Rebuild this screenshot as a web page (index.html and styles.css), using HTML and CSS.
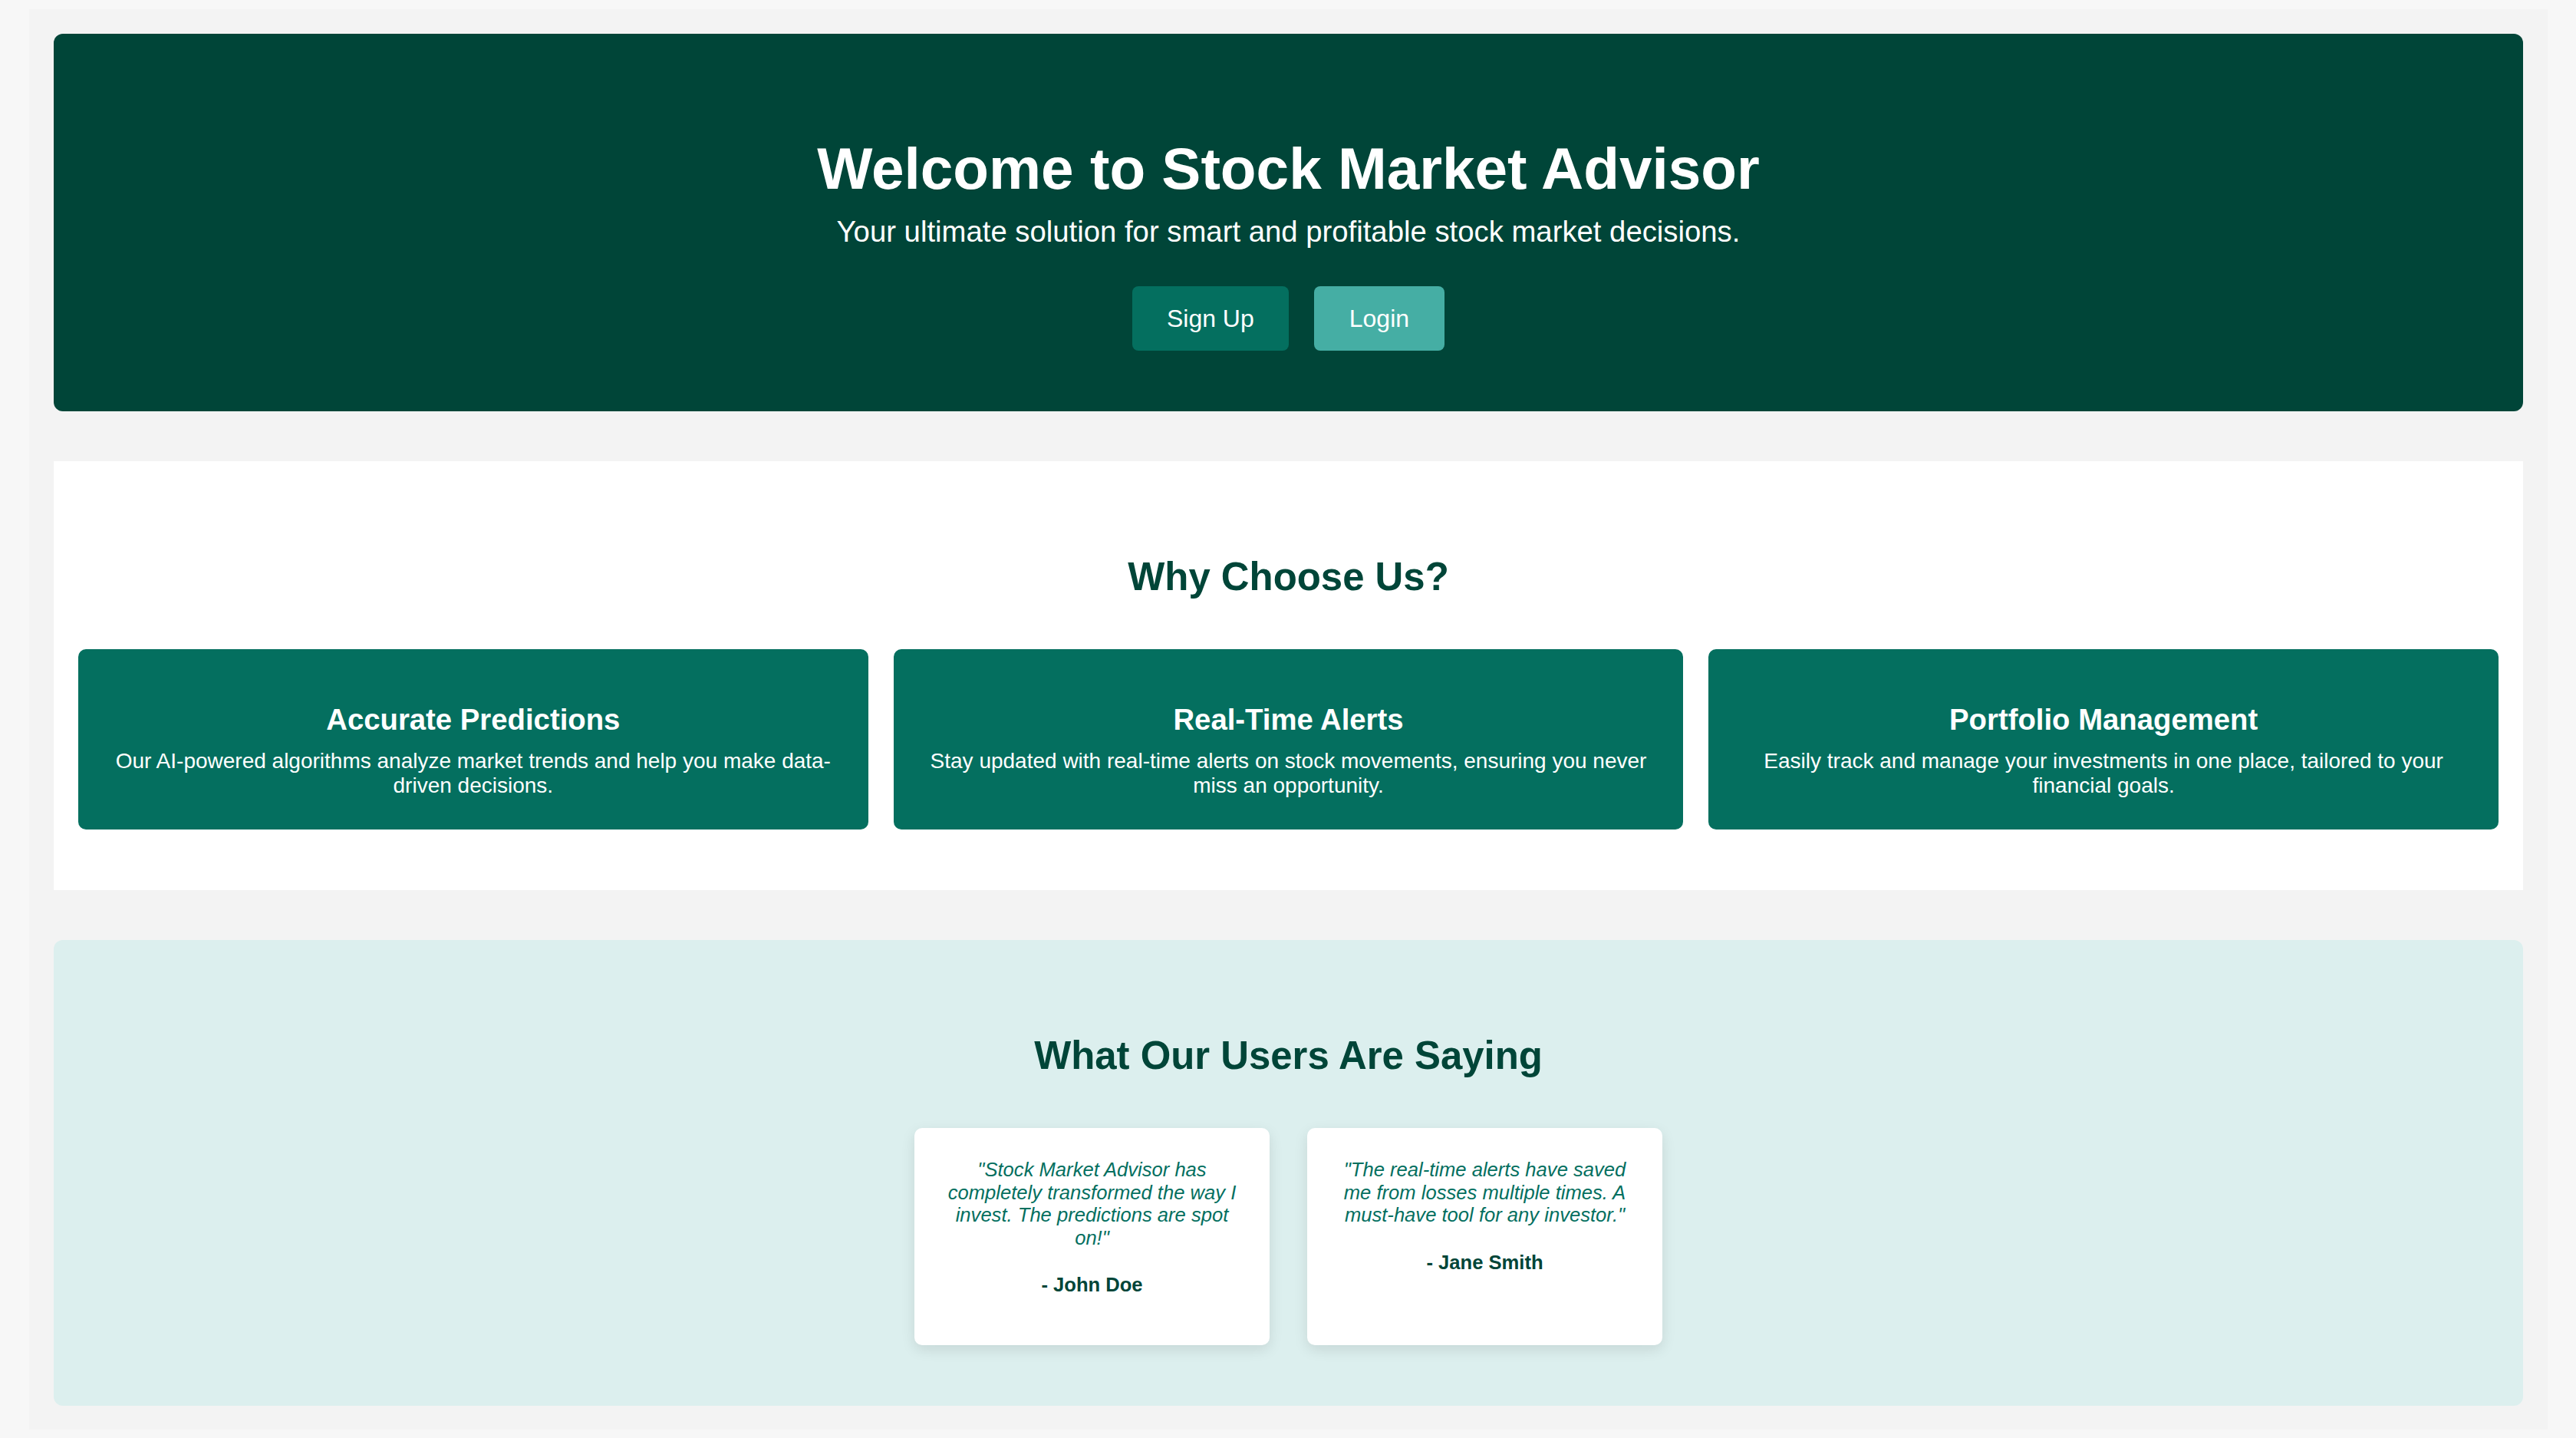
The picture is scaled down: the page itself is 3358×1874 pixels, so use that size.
FILE: index.html
```html
<!DOCTYPE html>
<html lang="en">
<head>
<meta charset="utf-8">
<title>Stock Market Advisor</title>
<link rel="stylesheet" href="styles.css">
</head>
<body>
<div class="page">
  <header class="hero">
    <h1 class="hero-title">Welcome to Stock Market Advisor</h1>
    <p class="hero-sub">Your ultimate solution for smart and profitable stock market decisions.</p>
    <div class="hero-actions">
      <a class="btn btn-primary" href="#">Sign Up</a>
      <a class="btn btn-secondary" href="#">Login</a>
    </div>
  </header>

  <section class="features">
    <h2 class="section-title">Why Choose Us?</h2>
    <div class="feature-grid">
      <div class="feature-card">
        <h3 class="feature-title">Accurate Predictions</h3>
        <p class="feature-text">Our AI-powered algorithms analyze market trends and help you make data-driven decisions.</p>
      </div>
      <div class="feature-card">
        <h3 class="feature-title">Real-Time Alerts</h3>
        <p class="feature-text">Stay updated with real-time alerts on stock movements, ensuring you never miss an opportunity.</p>
      </div>
      <div class="feature-card">
        <h3 class="feature-title">Portfolio Management</h3>
        <p class="feature-text">Easily track and manage your investments in one place, tailored to your financial goals.</p>
      </div>
    </div>
  </section>

  <section class="testimonials">
    <h2 class="section-title">What Our Users Are Saying</h2>
    <div class="testimonial-row">
      <div class="testimonial">
        <p class="quote">"Stock Market Advisor has completely transformed the way I invest. The predictions are spot on!"</p>
        <p class="author">- John Doe</p>
      </div>
      <div class="testimonial">
        <p class="quote">"The real-time alerts have saved me from losses multiple times. A must-have tool for any investor."</p>
        <p class="author">- Jane Smith</p>
      </div>
    </div>
  </section>
</div>
</body>
</html>
```

FILE: styles.css
```css
* {
  box-sizing: border-box;
}

html, body {
  margin: 0;
  padding: 0;
}

body {
  background: #f7f7f7;
  font-family: "Liberation Sans", Arial, Helvetica, sans-serif;
  padding: 12px 37px 10px 38px;
}

.page {
  background: #f3f3f3;
  padding: 32px 32px 31px;
  display: flex;
  flex-direction: column;
  gap: 65px;
}

/* Hero */
.hero {
  background: #004538;
  border-radius: 12px;
  color: #ffffff;
  text-align: center;
  padding: 79px 32px 79px;
}

.hero-title {
  margin: 53px 0 0;
  font-size: 76.5px;
  font-weight: 700;
  line-height: 88px;
}

.hero-sub {
  margin: 15.5px 0 0;
  font-size: 38.3px;
  line-height: 44px;
}

.hero-actions {
  margin-top: 49.5px;
  display: flex;
  justify-content: center;
  gap: 33px;
}

.btn {
  display: block;
  font-size: 32px;
  line-height: 37px;
  padding: 23.5px 45px;
  border-radius: 8px;
  color: #ffffff;
  text-decoration: none;
}

.btn-primary {
  background: #046f5f;
}

.btn-secondary {
  background: #45aea4;
  padding-left: 46px;
  padding-right: 46px;
}

/* Sections */
.section-title {
  margin: 43px 0 64.5px;
  font-size: 50.9px;
  line-height: 58.5px;
  font-weight: 700;
  color: #004538;
  text-align: center;
}

.features {
  background: #ffffff;
  padding: 79px 32px 79px;
}

.feature-grid {
  display: grid;
  grid-template-columns: repeat(3, 1fr);
  gap: 33px;
}

.feature-card {
  background: #046f5f;
  color: #ffffff;
  border-radius: 10px;
  text-align: center;
  padding: 70px 42px 42px;
}

.feature-title {
  margin: 0 0 16px;
  font-size: 38.3px;
  line-height: 44px;
  font-weight: 700;
}

.feature-text {
  margin: 0;
  font-size: 28px;
  line-height: 31.5px;
}

.testimonials {
  background: #dcefee;
  border-radius: 12px;
  padding: 79px 32px 79px;
}

.testimonial-row {
  display: flex;
  justify-content: center;
  gap: 49px;
}

.testimonial {
  width: 463px;
  background: #ffffff;
  border-radius: 10px;
  box-shadow: 0 6px 18px rgba(0, 0, 0, 0.10);
  text-align: center;
  padding: 40.4px 42px 63px;
}

.quote {
  margin: 0;
  font-size: 25.6px;
  line-height: 29.4px;
  font-style: italic;
  color: #046f5f;
}

.author {
  margin: 32.4px 0 0;
  font-size: 25.6px;
  line-height: 29.4px;
  font-weight: 700;
  color: #004538;
}
```
